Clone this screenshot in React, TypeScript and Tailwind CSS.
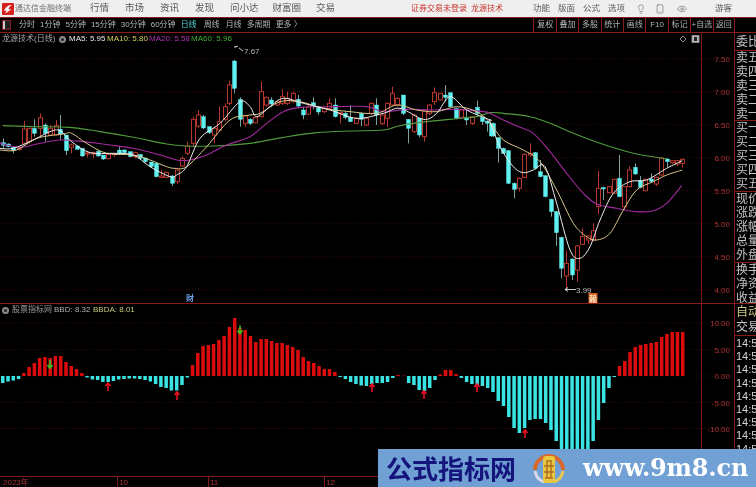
import { Lightbulb, Smartphone, Eye } from 'lucide-react';

const cjk = '"Liberation Sans","Noto Sans CJK SC",sans-serif';

// [x, bodyTop, bodyBottom, wickTop, wickBottom, up] all read off 3x crops
type Candle = [number, number, number, number?, number?, number?];
const segments: { ox: number; oy: number; rows: Candle[] }[] = [
  {
    ox: 0,
    oy: 60,
    rows: [
      [8, 248, 256, 235, 265, 0], [24, 252, 260, 250, 262, 0], [40, 262, 272, 258, 280, 0], [56, 264, 268, 262, 272, 1],
      [72, 207, 250, 183, 250, 1], [88, 205, 245, 205, 250, 1], [103, 205, 220, 178, 230, 0], [119, 173, 205, 160, 230, 1],
      [135, 195, 220, 190, 245, 0], [151, 205, 225, 195, 225, 1], [167, 197, 225, 180, 225, 1], [181, 208, 222, 165, 240, 0],
      [198, 225, 272, 225, 285, 0], [214, 255, 262, 250, 280, 1], [230, 258, 268, 256, 268, 0], [246, 265, 288, 265, 290, 0],
      [262, 279, 281, 275, 292, 1], [278, 278, 282, 275, 295, 1], [294, 274, 288, 270, 290, 0], [309, 285, 297, 285, 300, 0],
      [325, 283, 296, 283, 298, 1], [341, 281, 284, 278, 290, 1], [357, 270, 280, 258, 283, 0], [373, 270, 278, 268, 285, 0],
      [389, 275, 290, 275, 292, 0], [405, 278, 290, 275, 295, 1], [421, 283, 295, 283, 300, 0], [436, 294, 305, 294, 308, 0],
      [452, 306, 320, 306, 322, 0], [468, 310, 350, 310, 352, 0], [484, 348, 352, 330, 355, 1], [499, 337, 352, 335, 355, 1],
      [515, 348, 370, 345, 378, 0], [530, 330, 365, 325, 372, 1], [546, 295, 318, 290, 320, 1], [562, 258, 280, 245, 285, 1],
      [578, 178, 250, 170, 262, 1], [594, 165, 198, 150, 205, 1], [610, 170, 204, 165, 208, 0], [626, 200, 218, 198, 222, 0],
      [642, 205, 225, 200, 250, 1], [658, 185, 210, 140, 215, 1], [674, 140, 178, 130, 185, 1], [688, 75, 130, 62, 135, 1],
      [703, 3, 85, 0, 100, 0], [719, 118, 178, 112, 200, 0], [735, 168, 190, 165, 200, 1],
    ],
  },
  {
    ox: 250,
    oy: 60,
    rows: [
      [0, 178, 190, 175, 195, 0], [16, 172, 188, 170, 190, 1], [34, 95, 170, 65, 172, 1], [48, 112, 135, 110, 140, 1],
      [64, 120, 132, 112, 140, 0], [80, 125, 135, 122, 138, 1], [96, 110, 130, 88, 135, 1], [112, 115, 130, 95, 135, 1],
      [128, 100, 125, 95, 128, 1], [143, 118, 138, 105, 145, 0], [158, 150, 165, 140, 178, 0], [175, 140, 162, 135, 165, 1],
      [190, 128, 138, 112, 148, 0], [205, 140, 156, 138, 165, 0], [222, 145, 155, 140, 160, 1], [238, 130, 145, 115, 148, 1],
      [254, 135, 170, 115, 172, 0], [270, 158, 162, 155, 190, 1], [286, 160, 172, 155, 178, 0], [301, 172, 185, 135, 185, 0],
      [317, 175, 190, 172, 192, 1], [333, 160, 178, 158, 198, 0], [349, 175, 195, 172, 198, 1], [363, 130, 160, 128, 165, 1],
      [379, 135, 165, 115, 195, 0], [395, 165, 190, 160, 195, 1], [411, 130, 175, 128, 200, 1], [427, 100, 135, 80, 138, 1],
      [442, 115, 135, 112, 140, 1], [459, 105, 160, 105, 165, 0], [475, 178, 205, 178, 250, 0], [491, 165, 215, 163, 218, 1],
      [507, 175, 225, 175, 232, 0], [523, 150, 230, 148, 245, 1], [538, 135, 160, 133, 165, 1], [553, 98, 125, 82, 135, 1],
      [569, 100, 120, 98, 122, 1], [585, 105, 112, 75, 125, 0], [601, 98, 140, 98, 142, 0], [617, 145, 175, 143, 178, 0],
      [633, 150, 172, 148, 175, 1], [649, 172, 180, 150, 195, 0], [665, 170, 190, 168, 195, 1], [681, 142, 160, 122, 165, 0],
      [696, 172, 185, 170, 195, 0], [712, 183, 190, 183, 215, 0], [728, 190, 228, 188, 230, 0],
    ],
  },
  {
    ox: 490,
    oy: 90,
    rows: [
      [4, 102, 138, 100, 140, 0], [24, 143, 175, 143, 218, 0], [40, 175, 190, 173, 192, 0], [55, 182, 280, 180, 282, 0],
      [72, 280, 298, 278, 325, 0], [88, 265, 295, 262, 305, 1], [103, 193, 262, 190, 265, 1], [119, 190, 195, 160, 200, 1],
      [135, 188, 235, 186, 238, 0], [150, 245, 260, 210, 262, 0], [166, 257, 320, 255, 322, 0], [182, 328, 365, 326, 380, 0],
      [198, 365, 428, 363, 468, 0], [214, 442, 535, 440, 565, 0], [229, 520, 558, 482, 600, 1], [245, 507, 555, 505, 570, 0],
      [261, 468, 540, 465, 575, 1], [277, 440, 463, 415, 465, 1], [293, 438, 450, 436, 462, 1], [309, 422, 450, 400, 452, 1],
      [325, 295, 350, 243, 372, 1], [340, 293, 297, 290, 330, 0], [356, 290, 308, 288, 310, 1], [372, 268, 310, 266, 312, 1],
      [387, 265, 320, 195, 322, 0], [403, 290, 350, 288, 360, 1], [418, 240, 290, 228, 292, 1], [434, 232, 252, 220, 254, 0],
      [450, 272, 292, 258, 295, 0], [466, 268, 302, 266, 304, 1], [482, 267, 275, 250, 278, 0], [498, 262, 282, 260, 288, 1],
      [514, 204, 255, 202, 258, 1], [530, 207, 215, 205, 232, 0], [546, 212, 218, 210, 222, 1], [561, 212, 222, 210, 228, 1],
      [577, 208, 220, 206, 232, 1],
    ],
  },
];

type Pt = [number, number];
const seg = (ox: number, oy: number, pts: Pt[]): Pt[] => pts.map(([x, y]) => [ox + x / 3, oy + y / 3]);

// catmull-rom so the moving averages don't look like polylines
const smooth = (pts: Pt[]) => {
  let d = `M${pts[0][0]} ${pts[0][1]}`;
  for (let i = 0; i < pts.length - 1; i++) {
    const p0 = pts[i - 1] || pts[i];
    const p1 = pts[i];
    const p2 = pts[i + 1];
    const p3 = pts[i + 2] || p2;
    d += `C${p1[0] + (p2[0] - p0[0]) / 6} ${p1[1] + (p2[1] - p0[1]) / 6} ${p2[0] - (p3[0] - p1[0]) / 6} ${p2[1] - (p3[1] - p1[1]) / 6} ${p2[0]} ${p2[1]}`;
  }
  return d;
};

const ma60 = [
  ...seg(0, 60, [[8, 197], [100, 200], [210, 202], [300, 215], [400, 232], [500, 252], [555, 258], [640, 258]]),
  ...seg(250, 60, [[0, 250], [100, 232], [200, 218], [300, 213], [400, 210], [450, 197], [530, 185], [600, 178], [680, 170]]),
  ...seg(490, 90, [[0, 68], [40, 70], [120, 80], [180, 100], [250, 130], [330, 160], [430, 190], [530, 207]]),
];
const ma20 = [
  ...seg(0, 60, [[0, 250], [60, 262], [120, 250], [180, 240], [250, 245], [330, 255], [400, 265], [480, 285], [530, 300], [570, 300], [620, 285], [680, 255]]),
  ...seg(250, 60, [[0, 230], [50, 190], [100, 155], [150, 142], [250, 140], [350, 140], [400, 155], [470, 148], [550, 150], [620, 148], [700, 155]]),
  ...seg(490, 90, [[0, 70], [40, 90], [90, 112], [130, 130], [180, 185], [230, 250], [280, 310], [320, 342], [380, 355], [440, 365], [490, 362], [530, 340], [575, 287]]),
];
const ma10 = [
  ...seg(0, 60, [[0, 270], [50, 270], [110, 235], [190, 222], [215, 220], [260, 250], [320, 280], [400, 285], [450, 300], [500, 320], [525, 325], [560, 320], [620, 260], [690, 180]]),
  ...seg(250, 60, [[0, 165], [30, 160], [90, 125], [150, 125], [220, 145], [300, 155], [380, 160], [440, 135], [500, 150], [560, 155], [620, 140], [680, 155]]),
  ...seg(490, 90, [[0, 98], [40, 150], [100, 180], [150, 215], [200, 300], [250, 400], [290, 440], [320, 450], [360, 430], [400, 360], [440, 300], [490, 275], [530, 255], [577, 240]]),
];
const ma5 = [
  ...seg(0, 60, [[0, 265], [40, 265], [100, 240], [150, 215], [180, 212], [215, 245], [270, 278], [340, 280], [400, 285], [450, 320], [510, 350], [530, 345], [560, 320], [600, 235], [660, 190], [720, 125]]),
  ...seg(250, 60, [[0, 140], [20, 170], [60, 140], [100, 115], [160, 130], [240, 150], [320, 175], [400, 160], [450, 145], [520, 178], [560, 160], [600, 110], [650, 150], [720, 180]]),
  ...seg(490, 90, [[0, 95], [30, 170], [70, 230], [100, 248], [130, 240], [165, 230], [200, 340], [240, 480], [270, 505], [300, 470], [330, 390], [370, 310], [420, 275], [470, 270], [530, 235], [577, 212]]),
];

const bbd = [
  -7, -5.5, -4.5, -3, 3, 9, 13, 18, 19, 18, 20, 20, 14, 10, 7, 3, -1.5, -3.5, -4, -6, -6, -5, -3.5, -3, -2.5, -2.5, -3, -4, -5.5, -8, -11, -12, -14.5, -14.5, -9, -1.5, 11, 23, 30, 31, 32, 36, 40, 49, 58, 48, 46, 40, 34, 37, 37, 35, 33, 33, 31, 29, 26,
  19, 15, 13, 10, 7, 7, 4, -1, -3, -6, -8, -9.5, -10, -8, -7, -7, -6, -2, 1, 0.3, -7, -9, -14, -15, -12, -4, 1.5, 6, 6, 2, -2, -6, -8, -9, -10, -12, -16, -25, -30, -41, -52, -57, -52, -44, -43, -43, -47, -54, -65, -75, -75, -75, -75, -75, -75, -65, -44, -27, -12, -1, 10, 15, 24, 29, 31, 32, 33, 34, 39, 42, 44, 44, 44,
];

const prices = [[58.7, '7.50'], [91.7, '7.00'], [124.7, '6.50'], [157.7, '6.00'], [190.7, '5.50'], [223.7, '5.00'], [256.7, '4.50'], [289.7, '4.00']] as const;
const subTicks = [[323, '10.00'], [349.5, '5.00'], [376, '0.00'], [402.5, '-5.00'], [428.5, '-10.00']] as const;

const periods = ['1分钟', '5分钟', '15分钟', '30分钟', '60分钟'];
const tools = ['复权', '叠加', '多股', '统计', '画线', 'F10', '标记', '+自选', '返回'];
const quote = [
  { h: 'h-[70px]', rows: ['卖五', '卖四', '卖三', '卖二', '卖一'] },
  { h: 'h-[71px]', rows: ['买一', '买二', '买三', '买四', '买五'] },
  { h: 'h-[71px]', rows: ['现价', '涨跌', '涨幅', '总量', '外盘'] },
  { h: 'h-[41px]', rows: ['换手', '净资', '收益'] },
];
const ticks = ['14:59', '14:59', '14:58', '14:58', '14:58', '14:58', '14:58', '14:58', '14:58'];

const Arrow = ({ x, y, up }: { x: number; y: number; up: boolean }) => (
  <g stroke={up ? '#ef0f24' : '#32c81e'} fill="none" strokeWidth="1.6">
    <path d={`M${x} ${y - 4}V${y + 4}`} />
    <path d={up ? `M${x - 2.5} ${y - 1}L${x} ${y - 4}L${x + 2.5} ${y - 1}` : `M${x - 2.5} ${y + 1}L${x} ${y + 4}L${x + 2.5} ${y + 1}`} />
  </g>
);

const Dot = () => (
  <span className="flex h-[7px] w-[7px] items-center justify-center rounded-full bg-[#8a8a8a]">
    <span className="h-[3px] w-[3px] rounded-full bg-[#222]" />
  </span>
);

function MainChart() {
  return (
    <div className="relative h-[271px] border-b border-[#8a1c1c]">
      <svg viewBox="0 33 735 270" className="block h-[270px] w-[735px]" style={{ fontFamily: cjk }}>
        {prices.map(([y]) => (
          <line key={y} x1="0" x2="734" y1={y} y2={y} stroke="#3d0b0b" strokeDasharray="1 2" />
        ))}
        <path d="M701.5 33V303M734.5 33V303" stroke="#7f1a1a" />
        {prices.map(([y, t]) => (
          <text key={t} x="730" y={y + 3} textAnchor="end" fontSize="8" fill="#a83434">{t}</text>
        ))}
        {segments.map(s =>
          s.rows.map(([zx, top, bot, hi, lo, up]) => {
            const x = Math.round(s.ox + zx / 3) + 0.5;
            const y1 = s.oy + top / 3;
            const y2 = s.oy + bot / 3;
            const color = up ? '#b9372c' : '#5ff0f0';
            return (
              <g key={`${s.ox}-${zx}`}>
                <path d={`M${x} ${s.oy + (hi ?? top) / 3}V${s.oy + (lo ?? bot) / 3}`} stroke={up ? '#b9372c' : '#7aa0a0'} />
                <rect x={x - 2} y={y1} width="4" height={Math.max(y2 - y1, 1)} fill={up ? '#000' : color} stroke={color} strokeWidth={up ? 1 : 0.4} />
              </g>
            );
          }),
        )}
        <path d={smooth(ma60)} fill="none" stroke="#4f9a3c" strokeWidth="1.1" />
        <path d={smooth(ma20)} fill="none" stroke="#a02a9c" strokeWidth="1.1" />
        <path d={smooth(ma10)} fill="none" stroke="#d9c78a" strokeWidth="1" />
        <path d={smooth(ma5)} fill="none" stroke="#eeeeee" strokeWidth="1" />
        <path d="M235 46L235 48M235 47L238 46M239 48L243 51" stroke="#c8c8c8" fill="none" />
        <text x="244" y="54" fontSize="8" fill="#b8b8b8">7.67</text>
        <path d="M576 289.5H565M568 287.5L565 289.5L568 291.5" stroke="#c8c8c8" fill="none" />
        <text x="567" y="293" dx="9" fontSize="8" fill="#b8b8b8">3.99</text>
        <text x="186" y="301" fontSize="8" fontWeight="700" fill="#6f9fe8">财</text>
        <rect x="588.5" y="293" width="9" height="10" fill="#d8641e" />
        <text x="589" y="301.5" fontSize="8" fontWeight="700" fill="#f8e4c8">赖</text>
        <path d="M683 36L686 39L683 42L680 39Z" stroke="#8a8a8a" fill="none" />
        <rect x="692" y="35.5" width="7" height="7" fill="#bbb" stroke="#888" />
        <rect x="694" y="37" width="3" height="4" fill="#222" />
      </svg>
      <div className="absolute left-[2px] top-[1px] flex h-[10px] items-center whitespace-nowrap text-[8px] leading-[10px]">
        <span className="w-[57px] text-[#a8a8a8]">龙源技术(日线)</span>
        <Dot />
        <span className="ml-[3px] w-[38px] text-[#e8e8e8]">MA5: 5.95</span>
        <span className="w-[42px] text-[#d8d060]">MA10: 5.80</span>
        <span className="w-[42px] text-[#b030b0]">MA20: 5.58</span>
        <span className="text-[#40b030]">MA60: 5.96</span>
      </div>
    </div>
  );
}

function SubChart() {
  const step = 680 / (bbd.length - 1);
  return (
    <div className="relative flex-1">
      <svg viewBox="0 304 735 183" className="block h-[183px] w-[735px]" style={{ fontFamily: cjk }}>
        {subTicks.map(([y]) => (
          <line key={y} x1="0" x2="734" y1={y} y2={y} stroke="#3d0b0b" strokeDasharray="1 2" />
        ))}
        <path d="M701.5 304V487M734.5 304V487M0 476.5H734M117.5 476V487M208.5 476V487M324.5 476V487" stroke="#7f1a1a" />
        {subTicks.map(([y, t]) => (
          <text key={t} x="730" y={y + 3} textAnchor="end" fontSize="8" fill="#a83434">{t}</text>
        ))}
        {bbd.map((v, i) => (
          <rect
            key={i}
            x={1 + i * step}
            y={v > 0 ? 376 - v : 376}
            width="3.5"
            height={Math.abs(v)}
            fill={v > 0 ? '#dc0c0c' : '#3ae4e4'}
          />
        ))}
        <Arrow x={50} y={364} up={false} />
        <Arrow x={240} y={329.5} up={false} />
        <Arrow x={108} y={387} up />
        <Arrow x={177} y={396} up />
        <Arrow x={372} y={388} up />
        <Arrow x={424} y={395} up />
        <Arrow x={477} y={388} up />
        <Arrow x={525} y={434} up />
        <text x="3" y="485" fontSize="8" fill="#a83434">2023年</text>
        <text x="119" y="485" fontSize="8" fill="#a83434">10</text>
        <text x="210" y="485" fontSize="8" fill="#a83434">11</text>
        <text x="326" y="485" fontSize="8" fill="#a83434">12</text>
      </svg>
      <div className="absolute left-[2px] top-[1px] flex h-[10px] items-center whitespace-nowrap text-[8px] leading-[10px]">
        <Dot />
        <span className="ml-[3px] w-[42px] text-[#9a9a9a]">股票指标网</span>
        <span className="w-[39px] text-[#b0b0b0]">BBD: 8.32</span>
        <span className="text-[#c8c880]">BBDA: 8.01</span>
      </div>
    </div>
  );
}

function QuotePanel() {
  return (
    <div className="w-[21px] overflow-hidden whitespace-nowrap text-[12px] leading-[14px] text-[#c4c4c4]">
      <div className="flex h-[18px] items-end border-b border-[#8a1c1c] pb-[1px] pl-px">委比</div>
      {quote.map(group => (
        <div key={group.rows[0]} className={`flex flex-col justify-around border-b border-[#8a1c1c] pl-px ${group.h}`}>
          {group.rows.map(t => (
            <div key={t}>{t}</div>
          ))}
        </div>
      ))}
      <div className="flex h-[32px] flex-col justify-around border-b border-[#8a1c1c] pl-px">
        <div className="text-[#c8c880]">自动</div>
        <div>交易</div>
      </div>
      <div className="flex flex-col pl-px pt-px text-[11px] leading-[13.2px] text-[#d4d4d4]">
        {ticks.map((t, i) => (
          <div key={i}>{t}</div>
        ))}
      </div>
    </div>
  );
}

export default function App() {
  return (
    <div className="relative flex h-[487px] w-[756px] flex-col overflow-hidden bg-black blur-[0.45px]" style={{ fontFamily: cjk }}>
      <div className="flex h-[17px] items-center bg-[#efefef] text-[9.5px] text-[#5a5a5a]">
        <div className="flex w-[411px] items-center">
          <svg viewBox="0 0 12 12" className="ml-[2px] h-[12px] w-[12px]">
            <rect width="12" height="12" rx="1" fill="#d8201c" />
            <path d="M2 8C4 3 7 2 10 2C8 3 7 4 6.5 6L9 6C7 8 5 10 3 10.5L5 7.5Z" fill="#fff" />
          </svg>
          <span className="ml-[1px] w-[75px] text-[8px] text-[#707070]">通达信金融终端</span>
          <span className="mr-[16px]">行情</span>
          <span className="mr-[16px]">市场</span>
          <span className="mr-[16px]">资讯</span>
          <span className="mr-[16px]">发现</span>
          <span className="mr-[14px]">问小达</span>
          <span className="mr-[15px]">财富圈</span>
          <span>交易</span>
        </div>
        <span className="text-[8px] text-[#c8342c]">证券交易未登录</span>
        <span className="ml-[4px] w-[62px] text-[8px] text-[#c8342c]">龙源技术</span>
        <span className="w-[25px] text-[8.5px]">功能</span>
        <span className="w-[25px] text-[8.5px]">版面</span>
        <span className="w-[25px] text-[8.5px]">公式</span>
        <span className="w-[27px] text-[8.5px]">选项</span>
        <Lightbulb size={10} strokeWidth={1.3} className="ml-[1px] mr-[9px]" />
        <Smartphone size={10} strokeWidth={1.3} className="mr-[12px]" />
        <Eye size={10} strokeWidth={1.3} className="mr-[28px]" />
        <span className="text-[8.5px]">游客</span>
      </div>

      <div className="flex h-[16px] items-center border-y border-[#8a1c1c] text-[8px] text-[#b4b4b4]">
        <span className="ml-[2px] mr-[8px] flex h-[10px] w-[9px] items-center justify-end border border-[#8a1c1c] bg-[#ccc]">
          <span className="h-full w-[5px] bg-[#222]" />
        </span>
        <span className="mr-[5px]">分时</span>
        {periods.map(p => (
          <span key={p} className="mr-[5px]">{p}</span>
        ))}
        <span className="mr-[7px] text-[#4fd8d8]">日线</span>
        <span className="mr-[6px]">周线</span>
        <span className="mr-[5px]">月线</span>
        <span className="mr-[5px]">多周期</span>
        <span>更多 〉</span>
        <div className="ml-auto mr-[21px] flex h-full items-stretch">
          {tools.map(t => (
            <span key={t} className="flex w-[22.4px] items-center justify-center border-l border-[#8a1c1c] last:border-r">{t}</span>
          ))}
        </div>
      </div>

      <div className="flex flex-1">
        <div className="flex w-[735px] flex-col">
          <MainChart />
          <SubChart />
        </div>
        <QuotePanel />
      </div>

      <div className="absolute bottom-0 right-0 flex h-[38px] w-[378px] items-center whitespace-nowrap bg-[#70a0d4]">
        <span className="ml-[8px] w-[130px] text-[26px] font-bold leading-none text-[#14147c]" style={{ fontFamily: '"Noto Sans CJK SC",sans-serif' }}>公式指标网</span>
        <svg viewBox="0 0 38 38" className="ml-[14px] h-[38px] w-[38px]">
          <path d="M5 21A14 14 0 0 1 33 21" fill="none" stroke="#d8682c" strokeWidth="4" />
          <path d="M5 22A14 14 0 0 0 14 33" fill="none" stroke="#d8d8e8" strokeWidth="3" />
          <path d="M33 22A14 14 0 0 1 24 33" fill="none" stroke="#e8c850" strokeWidth="3" />
          <rect x="13" y="7" width="12" height="27" rx="3" fill="#e8c840" />
          <path d="M16 12H22M14 17H24M14 23H24M17 13V29M21 13V29M15 29H23" stroke="#b06820" strokeWidth="1.4" fill="none" />
        </svg>
        <span className="ml-[15px] text-[24px] font-bold leading-none tracking-[-0.2px] text-white" style={{ fontFamily: '"DejaVu Serif",serif' }}>www.9m8.cn</span>
      </div>
    </div>
  );
}
